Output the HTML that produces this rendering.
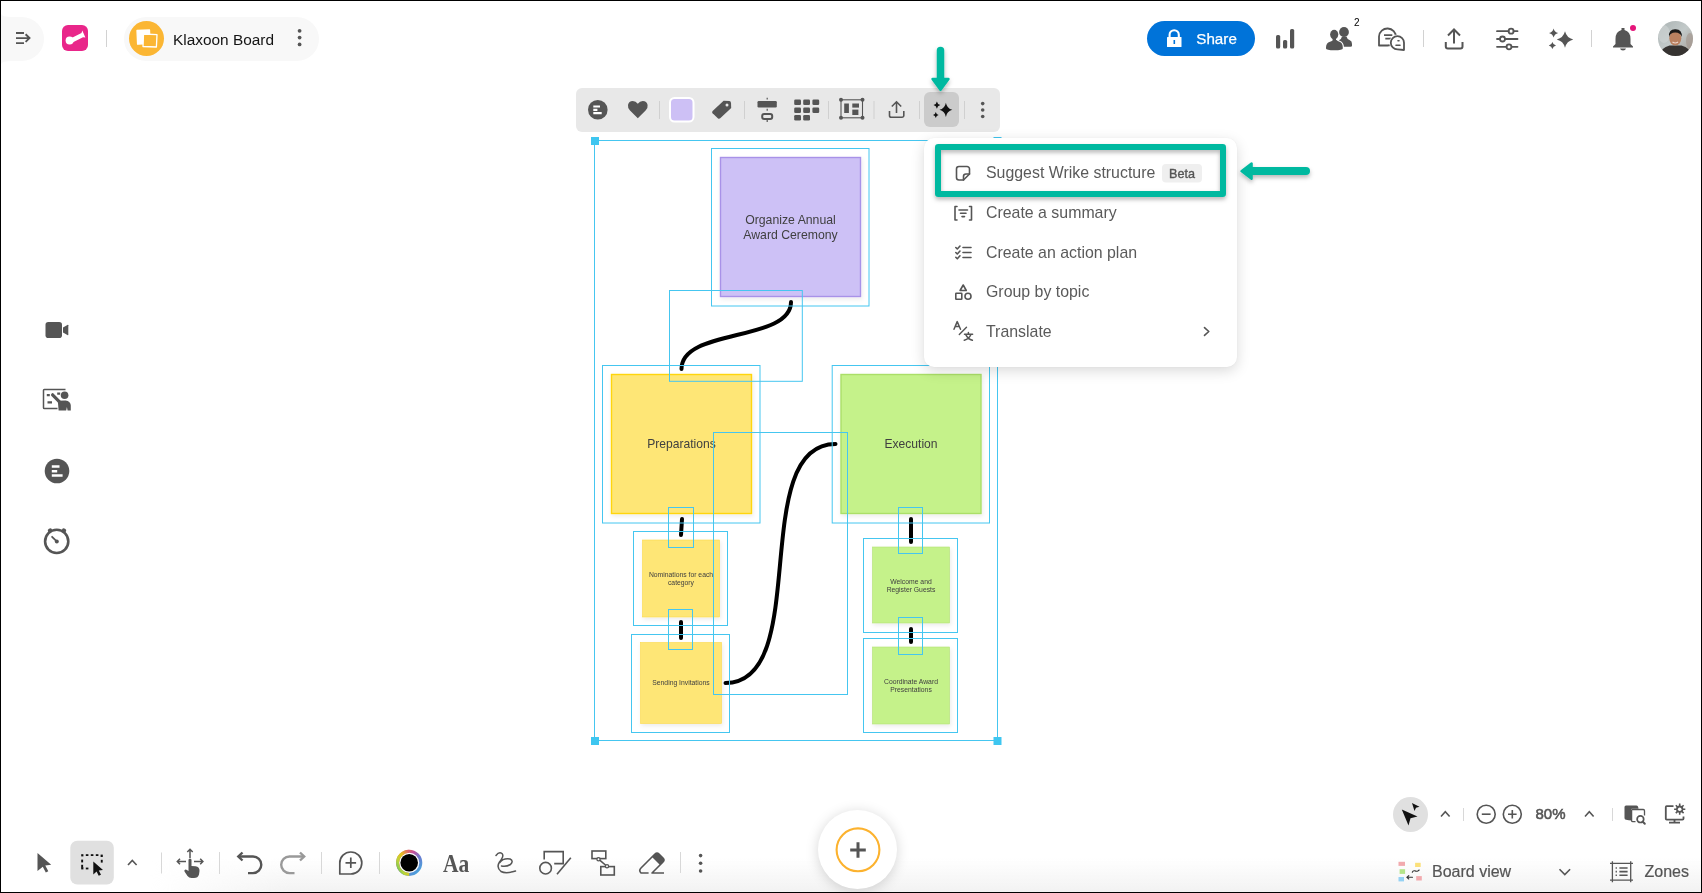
<!DOCTYPE html>
<html><head><meta charset="utf-8">
<style>
html,body{margin:0;padding:0;width:1702px;height:893px;overflow:hidden;background:#fff;}
body{position:relative;font-family:"Liberation Sans",sans-serif;}
.abs{position:absolute;}
svg{position:absolute;left:0;top:0;overflow:visible;will-change:transform;}
#bottomgrad{left:150px;top:858px;width:1552px;height:35px;background:linear-gradient(rgba(243,243,243,0),#f2f2f2);-webkit-mask-image:linear-gradient(to right,transparent 0,#000 140px);mask-image:linear-gradient(to right,transparent 0,#000 140px);}
#border{left:0;top:0;width:1700px;height:891px;border:1px solid #000;}
#menu{left:924px;top:138px;width:313px;height:229px;background:#fff;border-radius:10px;box-shadow:0 4px 14px rgba(0,0,0,0.15),0 0 2px rgba(0,0,0,0.06);}
#toolbar{left:576px;top:88px;width:424px;height:44px;background:#e8e8e8;border-radius:6px;}
#plusbtn{left:818px;top:810px;width:79px;height:79px;border-radius:50%;background:#fff;box-shadow:0 2px 13px rgba(0,0,0,0.17);}
</style></head>
<body>
<div id="bottomgrad" class="abs"></div>

<!-- CANVAS -->
<svg id="canvas" width="1702" height="893">
  <defs>
    <filter id="nshadow" x="-10%" y="-10%" width="130%" height="130%">
      <feDropShadow dx="1" dy="2" stdDeviation="2" flood-color="#000" flood-opacity="0.08"/>
    </filter>
  </defs>
  <g filter="url(#nshadow)">
    <rect x="720.5" y="157.5" width="140" height="139" fill="#cdc1f6" stroke="#a892e8" stroke-width="1.4"/>
    <rect x="611.5" y="374.5" width="140" height="139" fill="#fee676" stroke="#ffd50a" stroke-width="1.4"/>
    <rect x="841" y="374.5" width="140" height="139" fill="#c5f28a" stroke="#abdf68" stroke-width="1.4"/>
    <rect x="642.5" y="540" width="77" height="77" fill="#fee676" stroke="#fcd94a" stroke-width="0.6"/>
    <rect x="640.5" y="642.5" width="81" height="81" fill="#fee676" stroke="#fcd94a" stroke-width="0.6"/>
    <rect x="872.5" y="547" width="77" height="76" fill="#c5f28a" stroke="#b2e274" stroke-width="0.6"/>
    <rect x="872.5" y="647" width="77" height="77" fill="#c5f28a" stroke="#b2e274" stroke-width="0.6"/>
  </g>
  <g font-family="Liberation Sans" fill="#404040" text-anchor="middle">
    <text x="790.5" y="224" font-size="12.25">Organize Annual</text>
    <text x="790.5" y="239" font-size="12.25">Award Ceremony</text>
    <text x="681.5" y="448" font-size="12.1">Preparations</text>
    <text x="911" y="448" font-size="12.1">Execution</text>
    <text x="681" y="577" font-size="6.8">Nominations for each</text>
    <text x="681" y="585" font-size="6.8">category</text>
    <text x="681" y="685" font-size="6.8">Sending Invitations</text>
    <text x="911" y="584" font-size="6.8">Welcome and</text>
    <text x="911" y="592" font-size="6.8">Register Guests</text>
    <text x="911" y="684" font-size="6.8">Coordinate Award</text>
    <text x="911" y="692" font-size="6.8">Presentations</text>
  </g>
  <g stroke="#000" fill="none" stroke-linecap="round">
    <path d="M791 302 C791 342 681.5 328 681.5 369" stroke-width="4"/>
    <path d="M725.5 683 C813 683 747 444 835.5 444" stroke-width="4"/>
    <path d="M682 519 L681 535" stroke-width="4"/>
    <path d="M681 622 L681 638" stroke-width="4"/>
    <path d="M911 519 L911 542" stroke-width="4"/>
    <path d="M911 629 L911 642" stroke-width="4"/>
  </g>
  <g fill="none" stroke="#45c6f0" stroke-width="1">
    <rect x="594.5" y="140.5" width="403" height="600"/>
    <rect x="711.5" y="148.5" width="157.5" height="157.5"/>
    <rect x="669.5" y="290.5" width="132.8" height="90.8"/>
    <rect x="602.5" y="365.5" width="157.5" height="157.5"/>
    <rect x="832.2" y="365.5" width="157.3" height="157.5"/>
    <rect x="713.5" y="432.5" width="134" height="262"/>
    <rect x="668.5" y="507.5" width="25" height="40"/>
    <rect x="633.5" y="531.5" width="94" height="94"/>
    <rect x="668.5" y="609.5" width="24" height="40"/>
    <rect x="631.5" y="634.5" width="98" height="98"/>
    <rect x="898.5" y="507.5" width="24" height="46"/>
    <rect x="863.5" y="538.5" width="94" height="94"/>
    <rect x="898.5" y="617.5" width="24" height="37"/>
    <rect x="863.5" y="638.5" width="94" height="94"/>
  </g>
  <g fill="#3ec6f0">
    <rect x="591" y="137" width="8" height="8"/>
    <rect x="993.5" y="137" width="8" height="8"/>
    <rect x="591" y="737" width="8" height="8"/>
    <rect x="993.5" y="737" width="8" height="8"/>
  </g>
</svg>

<!-- HEADER LEFT -->
<div class="abs" style="left:0;top:17px;width:44px;height:44px;background:#f8f8f8;border-radius:0 22px 22px 0;"></div>
<div class="abs" style="left:124px;top:17px;width:195px;height:44px;background:#f8f8f8;border-radius:22px;"></div>
<svg width="1702" height="893">
  <path d="M1 13.8 Q2 17 12 17 H1 Z M1 64.2 Q2 61 12 61 H1 Z" fill="#f8f8f8"/>
  <g stroke="#555" stroke-width="1.9" fill="none">
    <path d="M16 33h8M16 38.1h13M16 43.1h8M25.6 34.3l3.9 3.8-3.9 3.8"/>
  </g>
  <rect x="62" y="25" width="26" height="26" rx="6" fill="#e9268a"/>
  <g fill="#fff">
    <circle cx="69.6" cy="40.4" r="4"/>
    <path d="M71 38.2 L81.5 33 L82.3 30.6 L85.4 37.6 L83 37.3 L72.5 42.6 Z"/>
  </g>
  <rect x="106" y="30" width="1" height="17" fill="#d2d2d2"/>
  <circle cx="146.5" cy="38.5" r="17.5" fill="#fbb633"/>
  <g stroke="#fff" stroke-width="1.3" stroke-linejoin="round">
    <path d="M137 30.5 L149.5 30 L150 43.5 L137.6 44.2 Z" fill="#fff"/>
    <path d="M143.5 34 L157 34.6 L156.4 47 L143 46.5 Z" fill="#fbb633"/>
  </g>
  <text x="173" y="45" font-size="15.4" fill="#141414" font-family="Liberation Sans">Klaxoon Board</text>
  <g fill="#555"><circle cx="299.6" cy="30.8" r="1.9"/><circle cx="299.6" cy="37.6" r="1.9"/><circle cx="299.6" cy="44.4" r="1.9"/></g>
</svg>

<!-- HEADER RIGHT -->
<svg width="1702" height="893">
  <rect x="1147" y="21" width="108" height="35" rx="17.5" fill="#0073d9"/>
  <g fill="#fff">
    <path d="M1169.6 38 V34.8 a4.6 4.6 0 0 1 9.2 0 V38" stroke="#fff" stroke-width="2.1" fill="none"/>
    <rect x="1167" y="37" width="14.5" height="10" rx="0.5"/>
  </g>
  <path d="M1174.3 40 v4" stroke="#0073d9" stroke-width="1.6"/>
  <text x="1196.3" y="44" font-size="15.2" fill="#fff" stroke="#fff" stroke-width="0.25" font-family="Liberation Sans">Share</text>

  <g fill="#555">
    <rect x="1276" y="35" width="4.2" height="13.5" rx="1.6"/>
    <rect x="1283" y="40" width="4.2" height="8.5" rx="1.6"/>
    <rect x="1290" y="29" width="4.2" height="19.5" rx="1.6"/>
  </g>
  <!-- people -->
  <g fill="#555">
    <ellipse cx="1344" cy="32" rx="4.9" ry="5.1"/>
    <path d="M1338.5 40.5 Q1341.5 39.5 1342 36.5 H1346.5 Q1347 39 1349.5 40 Q1352.2 41.2 1352 44 V45.8 Q1352 46.8 1350.5 46.8 H1343.5 Z"/>
  </g>
  <path d="M1337 40.6 Q1338 41.2 1339.5 41.8 Q1342.8 43 1342.8 47.5 V50.5" fill="none" stroke="#fff" stroke-width="2.2"/>
  <path d="M1326 47.5 Q1326 43 1330 41.8 Q1332 41 1333.5 40 H1336.5 Q1337.5 41 1339.5 41.8 Q1342.8 43 1342.8 47.5 V48.5 Q1342.8 50.3 1334.4 50.3 Q1326 50.3 1326 48.5 Z" fill="#555"/>
  <ellipse cx="1334.2" cy="34.6" rx="4.1" ry="4.8" fill="#555"/><rect x="1332.6" y="38" width="3.4" height="3" fill="#555"/>
  <text x="1354" y="25.8" font-size="10" fill="#000" font-family="Liberation Sans">2</text>
  <!-- chat -->
  <g stroke="#555" stroke-width="1.8" fill="none" stroke-linejoin="round">
    <path d="M1379 45.5 V36.5 A8.5 8.5 0 1 1 1387.5 45.5 Z"/>
    <path d="M1384 35.2 H1392.3 M1385.3 38.6 H1391"/>
  </g>
  <path d="M1404 50 V42.8 A6.6 6.6 0 1 0 1397.4 49.4 Z" fill="#fff" stroke="#fff" stroke-width="3.2" stroke-linejoin="round"/>
  <path d="M1404 50 V42.8 A6.6 6.6 0 1 0 1397.4 49.4 Z" fill="#fff" stroke="#555" stroke-width="1.8" stroke-linejoin="round"/>
  <path d="M1398 40.8 H1399 M1396 45.3 H1400" stroke="#555" stroke-width="1.6" stroke-linecap="round"/>
  <rect x="1423" y="30" width="1" height="17" fill="#d2d2d2"/>
  <!-- upload -->
  <g stroke="#555" stroke-width="2" fill="none">
    <path d="M1454 29.5 V43.5 M1448 35.5 L1454 29.5 L1460 35.5"/>
    <path d="M1445.8 42 V46.5 a2 2 0 0 0 2 2 H1460.5 a2 2 0 0 0 2 -2 V42"/>
  </g>
  <!-- sliders -->
  <g stroke="#555" stroke-width="1.8" fill="none" stroke-linecap="round">
    <path d="M1497 31.2 H1508.6 M1513.6 31.2 H1517.5 M1497 39 H1500 M1505 39 H1517.5 M1497 46.8 H1506.5 M1511.5 46.8 H1517.5"/>
    <circle cx="1511.1" cy="31.2" r="2.5"/>
    <circle cx="1502.5" cy="39" r="2.5"/>
    <circle cx="1509" cy="46.8" r="2.5"/>
  </g>
  <!-- sparkles -->
  <g fill="#555">
    <path d="M1565.00 31.30 Q1566.64 37.86 1573.20 39.50 Q1566.64 41.14 1565.00 47.70 Q1563.36 41.14 1556.80 39.50 Q1563.36 37.86 1565.00 31.30 Z"/>
    <path d="M1553.60 28.40 Q1554.52 32.08 1558.20 33.00 Q1554.52 33.92 1553.60 37.60 Q1552.68 33.92 1549.00 33.00 Q1552.68 32.08 1553.60 28.40 Z"/>
    <path d="M1552.40 41.90 Q1553.12 44.78 1556.00 45.50 Q1553.12 46.22 1552.40 49.10 Q1551.68 46.22 1548.80 45.50 Q1551.68 44.78 1552.40 41.90 Z"/>
  </g>
  <rect x="1591" y="30" width="1" height="17" fill="#d2d2d2"/>
  <!-- bell -->
  <g fill="#555">
    <path d="M1621.5 28 H1624.5 V30 Q1630.5 31.5 1630.5 39 V44 L1633 46.5 V47.5 H1613 V46.5 L1615.5 44 V39 Q1615.5 31.5 1621.5 30 Z"/>
    <path d="M1620 48.5 H1626 Q1625.5 50.5 1623 50.5 Q1620.5 50.5 1620 48.5 Z"/>
  </g>
  <circle cx="1633" cy="28" r="3" fill="#e5157a"/>
  <!-- avatar -->
  <defs>
    <clipPath id="avclip"><circle cx="1675.5" cy="38.5" r="17.5"/></clipPath>
    <linearGradient id="avbg" x1="0" y1="0" x2="1" y2="1">
      <stop offset="0" stop-color="#a9b1b1"/><stop offset="0.5" stop-color="#c3caca"/><stop offset="1" stop-color="#a39a92"/>
    </linearGradient>
  </defs>
  <g clip-path="url(#avclip)">
    <rect x="1658" y="21" width="35" height="35" fill="url(#avbg)"/>
    <ellipse cx="1690" cy="41" rx="4" ry="8" fill="#a09288" opacity="0.55"/>
    <ellipse cx="1664" cy="34" rx="6" ry="9" fill="#d0d6d6" opacity="0.6"/>
    <path d="M1659 56 Q1661 47.5 1669.5 45.5 L1681.5 45.5 Q1690 47.5 1692 56 Z" fill="#363331"/>
    <ellipse cx="1675.3" cy="38.3" rx="6" ry="7.3" fill="#b9805f"/>
    <path d="M1669 37 Q1668.3 29 1675.3 29.2 Q1682.3 29 1681.8 37 Q1680.5 32.5 1675.3 32.5 Q1670 32.5 1669 37 Z" fill="#1c1a19"/>
    <path d="M1672.5 42 Q1675.3 44 1678 42" stroke="#f0d8d0" stroke-width="1.2" fill="none"/>
  </g>
</svg>

<!-- FLOATING TOOLBAR -->
<div id="toolbar" class="abs"></div>
<svg width="1702" height="893">
  <rect x="924" y="92" width="35" height="35" rx="6" fill="#cbcbcb"/>
  <g fill="#d0d0d0">
    <rect x="659" y="101" width="1" height="18"/>
    <rect x="744" y="101" width="1" height="18"/>
    <rect x="828" y="101" width="1" height="18"/>
    <rect x="873.5" y="101" width="1" height="18"/>
    <rect x="919" y="101" width="1" height="18"/>
    <rect x="964" y="101" width="1" height="18"/>
  </g>
  <!-- circle bars -->
  <circle cx="597.8" cy="109.8" r="9.8" fill="#555"/>
  <g stroke="#fff" stroke-width="2.2"><path d="M593.3 106.5H600M593.3 109.8H597.4M593.3 113.2H601.7"/></g>
  <!-- heart -->
  <path d="M637.8 118.2 L630 110.5 Q627.5 108 628 105 Q628.8 101 632.8 101 Q635.8 101 637.8 103.8 Q639.8 101 642.8 101 Q646.8 101 647.6 105 Q648.1 108 645.6 110.5 Z" fill="#555"/>
  <!-- swatch -->
  <rect x="670" y="98" width="23.5" height="23.5" rx="4.5" fill="#cdc0f5" stroke="#fff" stroke-width="2"/>
  <!-- tag -->
  <path d="M712.6 110.9 L723.6 100.8 L729.3 101.1 Q730.9 101.3 731 102.9 L731.2 107.9 L720.2 118.3 Q719 119.3 717.8 118.2 L712.6 113.3 Q711.5 112 712.6 110.9 Z" fill="#555"/>
  <circle cx="727" cy="104.9" r="1.5" fill="#e8e8e8"/>
  <!-- align -->
  <g fill="#555">
    <rect x="757.5" y="101" width="19.3" height="6.5" rx="1.2"/>
  </g>
  <rect x="762.2" y="114" width="10" height="5" rx="2" fill="none" stroke="#555" stroke-width="2"/>
  <path d="M767.2 97.8V99.6M767.2 108.8V110.8M767.2 120V122" stroke="#555" stroke-width="1.2"/>
  <!-- grid -->
  <g fill="#555">
    <rect x="794.2" y="99.5" width="6.8" height="5.5" rx="1.3"/><rect x="803.2" y="99.5" width="6.8" height="5.5" rx="1.3"/><rect x="812.4" y="99.5" width="6.8" height="5.5" rx="1.3"/>
    <rect x="794.2" y="107.5" width="6.8" height="5.5" rx="1.3"/><rect x="803.2" y="107.5" width="6.8" height="5.5" rx="1.3"/><rect x="812.4" y="107.5" width="6.8" height="5.5" rx="1.3"/>
    <rect x="794.2" y="115" width="6.8" height="5.5" rx="1.3"/><rect x="803.2" y="115" width="6.8" height="5.5" rx="1.3"/>
  </g>
  <!-- frame -->
  <rect x="841" y="99.8" width="21.5" height="18" fill="none" stroke="#555" stroke-width="1.1"/>
  <g fill="#555">
    <circle cx="841" cy="99.8" r="2"/><circle cx="862.5" cy="99.8" r="2"/><circle cx="841" cy="117.8" r="2"/><circle cx="862.5" cy="117.8" r="2"/>
    <rect x="844.2" y="103.5" width="4.7" height="9.5"/>
    <rect x="852.3" y="103.5" width="6.7" height="4.1"/>
    <rect x="852.3" y="109.6" width="6.1" height="5.4"/>
  </g>
  <!-- upload -->
  <g stroke="#555" stroke-width="1.6" fill="none">
    <path d="M896.5 102 V113 M891.8 106.5 L896.5 101.8 L901.2 106.5"/>
    <path d="M889.5 111 V115.5 a1.8 1.8 0 0 0 1.8 1.8 H902 a1.8 1.8 0 0 0 1.8 -1.8 V111"/>
  </g>
  <!-- sparkle black -->
  <g fill="#111">
    <path d="M945.90 102.70 Q946.99 108.59 952.30 109.80 Q946.99 111.01 945.90 116.90 Q944.81 111.01 939.50 109.80 Q944.81 108.59 945.90 102.70 Z"/>
    <path d="M936.90 101.50 Q937.48 104.49 940.30 105.10 Q937.48 105.71 936.90 108.70 Q936.32 105.71 933.50 105.10 Q936.32 104.49 936.90 101.50 Z"/>
    <path d="M935.80 112.10 Q936.28 114.59 938.60 115.10 Q936.28 115.61 935.80 118.10 Q935.32 115.61 933.00 115.10 Q935.32 114.59 935.80 112.10 Z"/>
  </g>
  <!-- kebab -->
  <g fill="#555"><circle cx="982.7" cy="103.6" r="1.8"/><circle cx="982.7" cy="110" r="1.8"/><circle cx="982.7" cy="116.5" r="1.8"/></g>
</svg>

<!-- MENU -->
<div id="menu" class="abs"></div>
<svg width="1702" height="893">
  <g font-family="Liberation Sans" font-size="15.9" fill="#5a5a5a">
    <text x="986" y="178.3">Suggest Wrike structure</text>
    <text x="986" y="218">Create a summary</text>
    <text x="986" y="258">Create an action plan</text>
    <text x="986" y="297.2">Group by topic</text>
    <text x="986" y="337">Translate</text>
  </g>
  <rect x="1162" y="164" width="40" height="18.5" rx="4" fill="#efefef"/>
  <text x="1169" y="178" font-family="Liberation Sans" font-size="12.6" fill="#555" stroke="#555" stroke-width="0.35">Beta</text>
  <g stroke="#555" stroke-width="1.6" fill="none" stroke-linejoin="round" stroke-linecap="round">
    <!-- sticky -->
    <path d="M959 166.5 H967 a2.5 2.5 0 0 1 2.5 2.5 V174 L963.5 180 H959 a2.5 2.5 0 0 1 -2.5 -2.5 V169 a2.5 2.5 0 0 1 2.5 -2.5 Z"/>
    <path d="M969.5 174 H966 a2.5 2.5 0 0 0 -2.5 2.5 V180"/>
    <!-- summary -->
    <path d="M957 206.5 H955 V220 H957 M969.5 206.5 H971.5 V220 H969.5"/>
    <path d="M959 210 H967.5 M960.5 213.3 H966 M962 216.6 H964.5"/>
    <!-- action plan -->
    <path d="M955.8 247.5 L957.3 249 L960 246 M955.8 252.5 L957.3 254 L960 251 M955.8 257.3 L957.3 258.8 L960 255.8"/>
    <path d="M963 247.5 H971 M963 252.5 H971 M963 257.5 H971"/>
    <!-- group -->
    <path d="M963.2 285 L966.3 290.5 H960.1 Z"/>
    <rect x="955.8" y="293.2" width="6" height="6" rx="0.5"/>
    <circle cx="968" cy="296.2" r="3"/>
    <!-- chevron -->
    <path d="M1204.5 327.6 L1208.8 331.5 L1204.5 335.4"/>
  </g>
  <!-- translate -->
  <g stroke="#555" stroke-width="1.5" fill="none" stroke-linecap="round" stroke-linejoin="round">
    <path d="M954 329.2 L957.2 321.6 L960.5 329.2 M955.3 326.6 H959.2"/>
    <path d="M959.3 334.6 L966.5 327.3" stroke-width="1.4"/>
    <path d="M964.5 334.3 H972.6 M968.4 332.6 V334 M965.9 334.8 Q968 339 972.4 340.2 M970.8 334.8 Q969 339 964.3 340.2"/>
  </g>
</svg>

<!-- TEAL HIGHLIGHTS -->
<svg width="1702" height="893">
  <defs>
    <filter id="tshadow" x="-10%" y="-30%" width="120%" height="160%">
      <feDropShadow dx="0" dy="2.5" stdDeviation="2" flood-color="#000" flood-opacity="0.28"/>
    </filter>
  </defs>
  <g filter="url(#tshadow)">
    <rect x="938" y="147" width="285" height="47" rx="0.3" fill="none" stroke="#00b9a0" stroke-width="6" stroke-linejoin="round"/>
    <path d="M940.5 50.5 V82" stroke="#00b9a0" stroke-width="7.5" stroke-linecap="round"/>
    <path d="M932.6 79 L948.4 79 L940.5 89.8 Z" fill="#00b9a0" stroke="#00b9a0" stroke-width="2.6" stroke-linejoin="round"/>
    <path d="M1250 171 H1306" stroke="#00b9a0" stroke-width="8" stroke-linecap="round"/>
    <path d="M1251.6 163.5 L1251.6 178.8 L1241.5 171.15 Z" fill="#00b9a0" stroke="#00b9a0" stroke-width="2.4" stroke-linejoin="round"/>
  </g>
</svg>

<!-- LEFT SIDEBAR -->
<svg width="1702" height="893">
  <g fill="#555">
    <rect x="45.5" y="322" width="16.5" height="16" rx="2.8"/>
    <path d="M63 327.6 L67.8 324.8 Q68.3 324.6 68.3 325.2 V334.8 Q68.3 335.4 67.8 335.2 L63 332.4 Z"/>
  </g>
  <!-- presenter -->
  <g>
    <path d="M57.5 408.6 H44.3 Q43.5 408.6 43.5 407.8 V390.3 Q43.5 389.5 44.3 389.5 H65.5" fill="none" stroke="#555" stroke-width="1.5"/>
    <path d="M46.8 395.2h3M57.2 393.6h3M47.5 402.4h4.5" stroke="#555" stroke-width="2.2"/>
    <circle cx="64.6" cy="395.2" r="3.8" fill="#555"/>
    <path d="M52.6 394.8 L59.5 401.8" stroke="#555" stroke-width="3.2" stroke-linecap="round"/>
    <path d="M57.8 400.8 L65.5 400.4 Q70.8 401.2 70.8 405.5 V410.6 H67.6 L66.9 407 L66.2 410.6 H58.6 Z" fill="#555"/>
  </g>
  <circle cx="57" cy="471" r="12.3" fill="#555"/>
  <g stroke="#fff" stroke-width="2.5"><path d="M51.8 466.5H59.5M51.8 471.2H57.2M51.8 475.6H62.6"/></g>
  <!-- timer -->
  <g stroke="#555" fill="none">
    <circle cx="56.7" cy="541.4" r="11.6" stroke-width="2.6"/>
    <path d="M52.1 536.8 L56.7 541.3" stroke-width="1.8" stroke-linecap="round"/>
  </g>
  <circle cx="56.8" cy="541.4" r="2" fill="#555"/>
  <ellipse cx="49.9" cy="530.2" rx="2.3" ry="1.7" transform="rotate(-35 49.9 530.2)" fill="#555"/>
  <ellipse cx="64.1" cy="530.2" rx="2.3" ry="1.7" transform="rotate(35 64.1 530.2)" fill="#555"/>
</svg>

<!-- BOTTOM TOOLBAR -->
<svg width="1702" height="893">
  <rect x="70.3" y="840.8" width="43.5" height="43.8" rx="7" fill="#e0e0e0"/>
  <path d="M37.5 853 L51.2 864.8 L45.3 865.6 L48.3 871.3 L45.8 872.6 L42.8 866.8 L37.5 871 Z" fill="#555"/>
  <g fill="#111">
    <rect x="81.2" y="854.2" width="2.2" height="2.2"/><rect x="85.8" y="854.2" width="2.6" height="1.8"/><rect x="90.8" y="854.2" width="2.6" height="1.8"/><rect x="95.8" y="854.2" width="2.6" height="1.8"/><rect x="100.6" y="854.6" width="2.2" height="2.4"/>
    <rect x="81.2" y="859.6" width="1.9" height="2.8"/><rect x="81.2" y="864.8" width="1.9" height="2.8"/><rect x="81.2" y="867.2" width="2.2" height="2.2"/>
    <rect x="85.8" y="867.6" width="2.6" height="1.8"/><rect x="100.8" y="859.8" width="1.9" height="2.8"/>
    <path d="M93.3 861.6 L103 870 L98.8 870.6 L101 874.8 L98.7 875.8 L96.6 871.6 L93.3 874.6 Z"/>
  </g>
  <path d="M128 865 L132.3 860.5 L136.6 865" stroke="#555" stroke-width="1.6" fill="none"/>
  <g fill="#d8d8d8">
    <rect x="161" y="852.5" width="1" height="21"/>
    <rect x="219" y="852" width="1" height="22"/>
    <rect x="321" y="852" width="1" height="22"/>
    <rect x="379" y="852" width="1" height="22"/>
    <rect x="680" y="852" width="1" height="21"/>
  </g>
  <!-- pan -->
  <g stroke="#555" stroke-width="1.5" fill="none">
    <path d="M190 849.5 V858 M187.3 852 L190 849.3 L192.7 852"/>
    <path d="M177.5 861.5 H186 M180 858.8 L177.3 861.5 L180 864.2"/>
    <path d="M194 861.5 H202.8 M200.2 858.8 L202.9 861.5 L200.2 864.2"/>
  </g>
  <path d="M188.5 860 Q188.5 858.5 190 858.5 Q191.5 858.5 191.5 860 V866 L195.5 866.3 Q199.8 867 199.5 871 L199 874.5 Q198 878 194 878 L191.5 878 Q189 878 187.5 876 L184.5 871.5 Q183.8 869.8 185.5 869.5 Q186.5 869.3 188.5 871 Z" fill="#555"/>
  <!-- undo redo -->
  <g stroke="#555" stroke-width="2.4" fill="none">
    <path d="M238.5 856.5 H253 a8.3 8.3 0 0 1 0 16.6 H248"/>
    <path d="M242.5 852.5 L238.3 856.5 L242.5 860.5"/>
  </g>
  <g stroke="#999" stroke-width="2.4" fill="none">
    <path d="M304 856.5 H289.5 a8.3 8.3 0 0 0 0 16.6 H294.5"/>
    <path d="M300 852.5 L304.2 856.5 L300 860.5"/>
  </g>
  <!-- comment plus -->
  <path d="M339.8 874 V863 a11 11 0 1 1 11 11 Z" fill="none" stroke="#555" stroke-width="1.7" stroke-linejoin="round"/>
  <path d="M350.8 857.5 V868 M345.5 862.8 H356.1" stroke="#555" stroke-width="1.7"/>
  <!-- color wheel -->
  <defs>
    <linearGradient id="cw1" x1="0" y1="0" x2="1" y2="1">
      <stop offset="0" stop-color="#f5a623"/><stop offset="0.35" stop-color="#c74f9a"/><stop offset="0.6" stop-color="#6a7bd0"/><stop offset="1" stop-color="#3fb0e0"/>
    </linearGradient>
    <linearGradient id="cw2" x1="1" y1="0" x2="0" y2="1">
      <stop offset="0" stop-color="#e05a7a"/><stop offset="0.4" stop-color="#e8c21c"/><stop offset="0.7" stop-color="#b8d53a"/><stop offset="1" stop-color="#55c06a"/>
    </linearGradient>
  </defs>
  <circle cx="409.2" cy="862.8" r="11.6" fill="none" stroke="url(#cw1)" stroke-width="3"/>
  <path d="M409.2 851.2 a11.6 11.6 0 0 0 0 23.2" fill="none" stroke="url(#cw2)" stroke-width="3"/>
  <circle cx="409.2" cy="862.8" r="8.8" fill="#000"/>
  <!-- Aa -->
  <text x="0" y="0" transform="translate(443,871.5) scale(1,1.2)" font-family="Liberation Serif" font-weight="bold" font-size="21.5" fill="#555">Aa</text>
  <!-- pen squiggle -->
  <path d="M496 855.5 Q499 851.5 502 853.5 Q504.5 856 499.5 862 Q496 867.5 501 871.5 Q506 874 515.5 871 M499.8 862.5 Q503 858 510 859 Q514 861 510.5 864.5 Q506 867 501.5 866" stroke="#555" stroke-width="1.5" fill="none" stroke-linecap="round"/>
  <!-- shapes -->
  <g stroke="#555" stroke-width="1.6" fill="none">
    <path d="M544.2 859.5 V851.6 H563.2 V863.6 H554.2"/>
    <circle cx="545.6" cy="868.2" r="5.8"/>
    <path d="M557 874.2 L570.8 857.8"/>
  </g>
  <!-- mindmap -->
  <g stroke="#555" stroke-width="1.6" fill="none">
    <rect x="592" y="851" width="13.8" height="7.6"/>
    <rect x="600.8" y="866.6" width="13.5" height="8.4"/>
    <path d="M598.2 858.8 L607.2 866.5"/>
  </g>
  <g fill="#fff" stroke="#555" stroke-width="1.3"><circle cx="598.5" cy="859.3" r="1.6"/><circle cx="607" cy="866.2" r="1.6"/></g>
  <!-- eraser -->
  <path d="M648.6 873 L641 873 Q638.5 870.5 641 868 L655 854 Q657 852 659 854 L663 858 Q665 860 663 862 L652 873 H664" fill="none" stroke="#555" stroke-width="1.6" stroke-linejoin="round"/>
  <path d="M655 854 Q657 852 659 854 L663 858 Q665 860 663 862 L660 865 L652 857 Z" fill="#555"/>
  <g fill="#555"><circle cx="700.6" cy="855.6" r="1.8"/><circle cx="700.6" cy="863.3" r="1.8"/><circle cx="700.6" cy="871" r="1.8"/></g>
</svg>

<!-- PLUS BUTTON -->
<div id="plusbtn" class="abs"></div>
<svg width="1702" height="893">
  <circle cx="858" cy="849.8" r="21.4" fill="none" stroke="#fcb22e" stroke-width="2.1"/>
  <path d="M858 842.2 V857.8 M850.2 850 H865.8" stroke="#555" stroke-width="3"/>
</svg>

<!-- BOTTOM RIGHT -->
<svg width="1702" height="893">
  <circle cx="1410.5" cy="814.5" r="17.5" fill="#e0e0e0"/>
  <g fill="#111">
    <path d="M1401.8 809.5 L1417.5 816.5 L1410.5 818.3 L1408.5 825.5 Z"/>
    <path d="M1412 803 L1419.5 806.7 L1416 807.7 L1414.5 811 Z"/>
  </g>
  <path d="M1441 816.5 L1445.3 811.8 L1449.6 816.5" stroke="#555" stroke-width="1.6" fill="none"/>
  <path d="M1585 816.5 L1589.3 811.8 L1593.6 816.5" stroke="#555" stroke-width="1.6" fill="none"/>
  <rect x="1463" y="808" width="1" height="13" fill="#d8d8d8"/>
  <rect x="1612" y="808" width="1" height="13" fill="#d8d8d8"/>
  <g stroke="#555" stroke-width="1.6" fill="none">
    <circle cx="1486.2" cy="814.2" r="9"/>
    <path d="M1481.8 814.2 H1490.6"/>
    <circle cx="1512.3" cy="814.2" r="9"/>
    <path d="M1508 814.2 H1516.6 M1512.3 809.9 V818.5"/>
  </g>
  <text x="1535.5" y="818.8" font-family="Liberation Sans" font-size="15" fill="#555" stroke="#555" stroke-width="0.55">80%</text>
  <!-- folder search -->
  <path d="M1626 805.5 H1636.5 Q1638 805.5 1638.3 807.5 L1638.5 808.8 H1632 Q1631 808.8 1631 810 V820.5 Q1629 820.5 1626 819.8 Q1624.5 819.5 1624.5 818 V807 Q1624.5 805.5 1626 805.5 Z" fill="#555"/>
  <path d="M1631.6 809.5 H1643.3 Q1644.5 809.5 1644.5 810.7 V815.5 M1635.5 821.6 H1632.8 Q1631.6 821.6 1631.6 820.4 V809.5" stroke="#555" stroke-width="1.3" fill="none"/>
  <circle cx="1640.4" cy="819.2" r="3.3" stroke="#555" stroke-width="1.7" fill="#fff"/>
  <path d="M1642.8 821.8 L1644.8 823.8" stroke="#555" stroke-width="2" stroke-linecap="round"/>
  <!-- monitor gear -->
  <g stroke="#555" stroke-width="1.8" fill="none">
    <path d="M1673.5 806.2 H1666.7 Q1665.8 806.2 1665.8 807.2 V818.7 Q1665.8 819.6 1666.7 819.6 H1682.5 Q1683.5 819.6 1683.5 818.7 V816.5"/>
    <path d="M1674.5 820 V822.5 M1669 822.7 H1680"/>
  </g>
  <g fill="#555">
    <circle cx="1679.7" cy="809.2" r="3.6"/>
    <path d="M1679.7 803.6 V814.8 M1674.1 809.2 H1685.3 M1675.8 805.3 L1683.6 813.1 M1683.6 805.3 L1675.8 813.1" stroke="#555" stroke-width="1.6"/>
  </g>
  <circle cx="1679.7" cy="809.2" r="1.8" fill="#fff"/>
  <!-- board view icon -->
  <g>
    <rect x="1398.5" y="861.8" width="6.5" height="4.1" fill="#f2aaae"/>
    <rect x="1399.6" y="869.2" width="5.5" height="4.7" fill="#b5e58a"/>
    <rect x="1398.5" y="877" width="5.5" height="4.4" fill="#95d2f4"/>
    <rect x="1415.1" y="862.8" width="5.6" height="4.2" fill="#fbe07a"/>
    <rect x="1416.2" y="876.1" width="5.6" height="4.4" fill="#f2aaae"/>
    <path d="M1412.3 872.3 Q1413 870.3 1414.8 870.8 Q1416.3 871.6 1417.8 871 L1419.2 870" stroke="#333" stroke-width="1.1" fill="none" stroke-linecap="round"/>
    <path d="M1407 877.3 H1412.5 M1408.8 875.6 L1406.9 877.3 L1408.8 879" stroke="#333" stroke-width="1.1" fill="none" stroke-linecap="round"/>
  </g>
  <text x="1432" y="876.8" font-family="Liberation Sans" font-size="16" fill="#555" stroke="#555" stroke-width="0.2">Board view</text>
  <path d="M1559.5 869.3 L1564.8 874.6 L1570.1 869.3" stroke="#555" stroke-width="1.6" fill="none"/>
  <!-- zones icon -->
  <g stroke="#555" stroke-width="1.3" fill="none">
    <path d="M1610 863.3 H1633 M1610 880.2 H1633 M1612.4 861.2 V882.2 M1630.7 861.2 V882.2"/>
  </g>
  <g stroke="#555" stroke-width="1.6">
    <path d="M1615.6 868 h1.3 M1615.6 871.6 h1.3 M1615.6 875.2 h1.3 M1619.4 868 H1627.6 M1619.4 871.6 H1627.6 M1619.4 875.2 H1627.6"/>
  </g>
  <text x="1644.5" y="876.8" font-family="Liberation Sans" font-size="16" fill="#555" stroke="#555" stroke-width="0.2">Zones</text>
</svg>

<div id="border" class="abs"></div>
</body></html>
